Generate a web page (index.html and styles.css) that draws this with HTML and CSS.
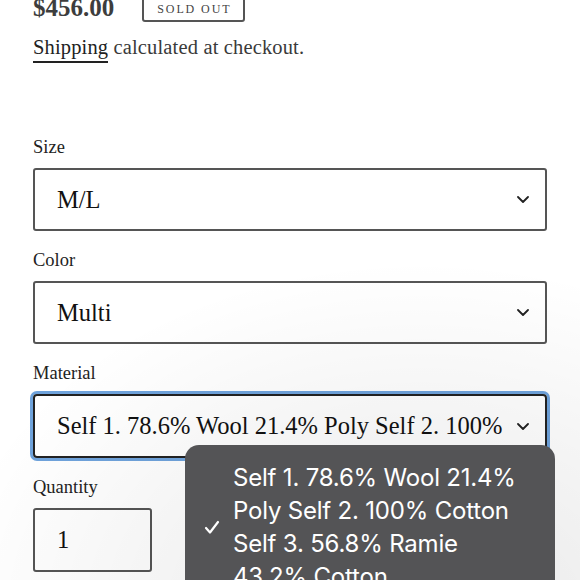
FILE: index.html
```html
<!DOCTYPE html>
<html lang="en">
<head>
<meta charset="utf-8">
<link rel="stylesheet" href="styles.css">
</head>
<body>
<main class="product">
  <div class="price-row">
    <span class="price">$456.00</span>
    <span class="badge">Sold out</span>
  </div>
  <p class="shipping"><a class="link" href="#">Shipping</a> calculated at checkout.</p>

  <div class="field first">
    <div class="label">Size</div>
    <div class="select"><span class="value">M/L</span><svg class="chev" viewBox="0 0 12 7" width="12" height="7"><path d="M1 1l5 5 5-5" fill="none" stroke="#222" stroke-width="1.8" stroke-linecap="round" stroke-linejoin="round"/></svg></div>
  </div>
  <div class="field">
    <div class="label">Color</div>
    <div class="select"><span class="value">Multi</span><svg class="chev" viewBox="0 0 12 7" width="12" height="7"><path d="M1 1l5 5 5-5" fill="none" stroke="#222" stroke-width="1.8" stroke-linecap="round" stroke-linejoin="round"/></svg></div>
  </div>
  <div class="field">
    <div class="label">Material</div>
    <div class="select focus"><span class="value wrapclip">Self 1. 78.6% Wool 21.4% Poly Self 2. 100% Cotton Self 3. 56.8% Ramie 43.2% Cotton</span><svg class="chev" viewBox="0 0 12 7" width="12" height="7"><path d="M1 1l5 5 5-5" fill="none" stroke="#222" stroke-width="1.8" stroke-linecap="round" stroke-linejoin="round"/></svg></div>
  </div>
  <div class="field">
    <div class="label">Quantity</div>
    <div class="qty">1</div>
  </div>
</main>
<div class="dim"></div>
<div class="menu">
  <svg class="check" viewBox="0 0 16 16" width="16" height="16"><path d="M2 9l4 4.5L14 3" fill="none" stroke="#fff" stroke-width="2.2" stroke-linecap="round" stroke-linejoin="round"/></svg>
  <div class="menu-text">Self 1. 78.6% Wool 21.4%<br>Poly Self 2. 100% Cotton<br>Self 3. 56.8% Ramie<br>43.2% Cotton</div>
</div>
</body>
</html>
```
FILE: styles.css
```css
html, body {
  margin: 0;
  padding: 0;
  background: #fff;
  height: 580px;
  overflow: hidden;
}
body {
  position: relative;
  font-family: "Liberation Serif", "DejaVu Serif", serif;
  color: #222;
}
.product {
  width: 514px;
  padding: 0 33px;
  margin-top: -9px;
}
.price-row {
  display: flex;
  align-items: center;
  gap: 28px;
  height: 34px;
}
.price {
  font-size: 25px;
  font-weight: bold;
  color: #3d3d3d;
}
.badge {
  display: inline-block;
  border: 2px solid #555;
  border-radius: 3px;
  padding: 4px 12px 3px 13px;
  font-size: 12px;
  letter-spacing: 1.9px;
  text-transform: uppercase;
  color: #444;
  line-height: 16px;
}
.shipping {
  margin: 11px 0 0;
  font-size: 20.5px;
  line-height: 22px;
  color: #3a3a3a;
  letter-spacing: 0.15px;
}
.link {
  color: #222;
  text-decoration: none;
  border-bottom: 2px solid #222;
  padding-bottom: 3px;
}
.field {
  margin-top: 19px;
}
.field.first {
  margin-top: 79px;
}
.label {
  font-size: 18.5px;
  line-height: 20px;
  color: #222;
  margin-bottom: 11px;
}
.select {
  box-sizing: border-box;
  height: 63px;
  border: 2px solid #555;
  border-radius: 3px;
  display: flex;
  align-items: center;
  padding: 0 16px 0 22px;
  font-size: 24.5px;
  color: #111;
  gap: 14px;
}
.value {
  flex: 1;
  white-space: nowrap;
  overflow: hidden;
  line-height: 30px;
}
.wrapclip {
  white-space: normal;
  height: 30px;
}
.chev { flex: none; }
.focus {
  height: 64px;
  border-color: #222;
  box-shadow: 0 0 0 3px #6fa3dc;
  border-radius: 4px;
}
.qty {
  box-sizing: border-box;
  width: 119px;
  height: 64px;
  border: 2px solid #555;
  border-radius: 3px;
  display: flex;
  align-items: center;
  padding-left: 22px;
  font-size: 24.5px;
  color: #111;
}
.dim {
  position: absolute;
  inset: 0;
  pointer-events: none;
  background: radial-gradient(ellipse 480px 360px at 420px 620px, rgba(0,0,0,0.09), rgba(0,0,0,0.04) 60%, rgba(0,0,0,0) 100%);
}
.menu {
  position: absolute;
  left: 185px;
  top: 445px;
  width: 370px;
  height: 160px;
  background: #545456;
  border-radius: 14px;
  display: flex;
  align-items: flex-start;
  box-sizing: border-box;
  padding: 16px 0 0 19px;
}
.check {
  margin-top: 58px;
  margin-right: 13px;
}
.menu-text {
  font-family: "Inter", "Roboto", sans-serif;
  font-size: 24px;
  line-height: 33px;
  color: #fff;
  letter-spacing: -0.2px;
}
```
